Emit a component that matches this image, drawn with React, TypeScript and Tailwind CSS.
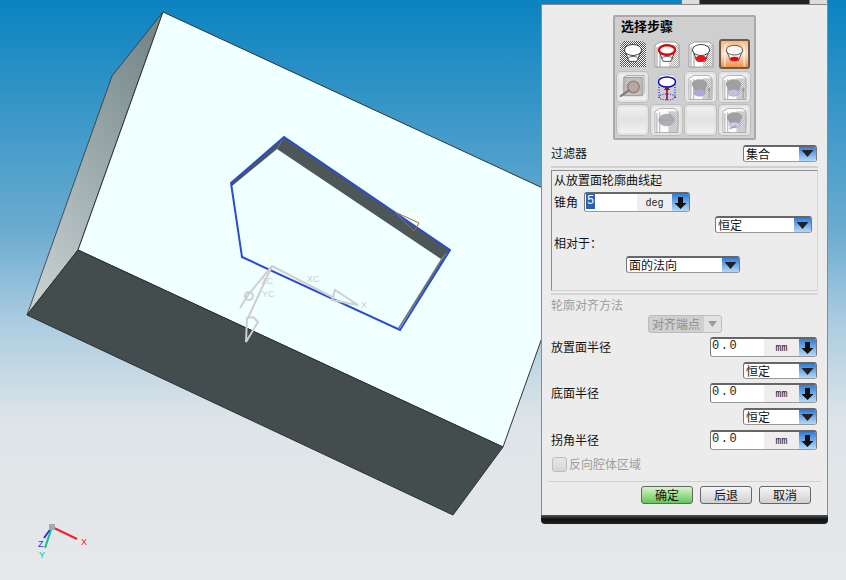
import React from "react";

const cjk = "font-['Noto_Sans_CJK_SC','Liberation_Sans',sans-serif]";

type IconKind =
  | "red"
  | "topRing"
  | "bottomFill"
  | "active"
  | "point"
  | "extrude"
  | "grayA"
  | "grayB"
  | "grayC"
  | "grayD"
  | "none";

// checker tile: only the coloured squares, the rest stays see-through
const Dither = ({ id, color }: { id: string; color: string }) => (
  <defs>
    <pattern id={id} width="2" height="2" patternUnits="userSpaceOnUse">
      <rect width="1" height="1" fill={color} />
      <rect x="1" y="1" width="1" height="1" fill={color} />
    </pattern>
  </defs>
);

const Sleeve = ({ fill }: { fill: string }) => (
  <g>
    <path d="M2 6 L7 3 L22 3 L26 6 L26 28 L2 28 Z" fill="#fff" stroke="#888" strokeWidth="0.8" />
    <rect x="16" y="6" width="10" height="22" fill={fill} />
    <path d="M4 8 V28 M7 7 V28" stroke="#999" strokeWidth="1" />
  </g>
);

const Bowl = ({ stroke = "#444", fill = "#fff" }: { stroke?: string; fill?: string }) => (
  <g>
    <path d="M5.5 11 L10 22 H18 L22.5 11 Z" fill={fill} stroke={stroke} strokeWidth="1" />
    <ellipse cx="14" cy="11" rx="8.5" ry="5.5" fill={fill} stroke={stroke} strokeWidth="1" />
    <ellipse cx="14" cy="20" rx="5" ry="2.5" fill={fill} stroke={stroke} strokeWidth="0.8" />
  </g>
);

const StepIcon = ({ kind }: { kind: IconKind }) => {
  if (kind === "none") return null;
  const id = `dither-${kind}`;
  const tone = kind === "red" ? "#ffffff" : kind.startsWith("gray") || kind === "point" ? "#8a8a8a" : "#aaaaaa";
  return (
    <svg width="28" height="30" viewBox="0 0 28 30">
      <Dither id={id} color={tone} />
      {kind === "red" && (
        <g>
          <path d="M1 5 L5 2 H23 L27 5 V28 H1 Z" fill="#f00a1e" />
          <path d="M1 5 L5 2 H23 L27 5 V28 H1 Z" fill={`url(#${id})`} />
          <Bowl />
        </g>
      )}
      {kind === "topRing" && (
        <g>
          <Sleeve fill={`url(#${id})`} />
          <Bowl />
          <ellipse cx="14" cy="11" rx="8" ry="4.5" fill="#fff" stroke="#f00000" strokeWidth="2.2" />
        </g>
      )}
      {kind === "bottomFill" && (
        <g>
          <Sleeve fill={`url(#${id})`} />
          <Bowl />
          <ellipse cx="14" cy="19.5" rx="5.5" ry="3" fill="#f01020" />
        </g>
      )}
      {kind === "active" && (
        <g>
          <path d="M4 28 V6 L7 4 M24 28 V6 L21 4" stroke="#fff" strokeWidth="1" fill="none" />
          <path d="M5.5 11 L10 22 H18 L22.5 11 Z" fill="#fff" fillOpacity="0.8" stroke="#555" strokeWidth="1" />
          <ellipse cx="14" cy="11" rx="8.5" ry="5" fill="#fff" fillOpacity="0.9" stroke="#555" strokeWidth="1" />
          <ellipse cx="14" cy="20" rx="4.5" ry="2.2" fill="#f00000" />
        </g>
      )}
      {kind === "point" && (
        <g opacity="0.85">
          <rect x="5" y="5" width="19" height="19" fill={`url(#${id})`} stroke="#888" strokeWidth="1" />
          <path d="M5 5 L8 3 H26 V21 L24 24" fill="none" stroke="#999" strokeWidth="1" />
          <circle cx="15" cy="15" r="6" fill="#a9a09a" stroke="#a06a5a" strokeWidth="1.5" />
          <path d="M1 25 L11 18" stroke="#666" strokeWidth="2" />
        </g>
      )}
      {kind === "extrude" && (
        <g>
          <path d="M6 10 V26 M22 10 V26" stroke="#0000c0" strokeWidth="1" strokeDasharray="1 1.5" />
          <path d="M5 5 L8 3 H20 L23 5" stroke="#aaa" strokeWidth="0.8" fill="#fff" />
          <ellipse cx="14" cy="10" rx="8.5" ry="5" fill="#fff" stroke="#0000d0" strokeWidth="1.4" />
          <ellipse cx="14" cy="25" rx="8" ry="3" fill="none" stroke="#0000c0" strokeWidth="1" strokeDasharray="1 1.5" />
          <path d="M14 28 V17" stroke="#8a1020" strokeWidth="1.6" />
          <path d="M11 18 L14 14 L17 18 Z" fill="#8a1020" />
        </g>
      )}
      {(kind === "grayA" || kind === "grayB") && (
        <g opacity="0.8">
          <Sleeve fill={`url(#${id})`} />
          <ellipse cx="13" cy="12" rx="8" ry="5" fill="#8f8f8f" />
          <path d="M5 12 L9 22 H18 L21 12 Z" fill="#8f8f8f" />
          <ellipse cx="13" cy="21" rx="6" ry="3.5" fill={kind === "grayA" ? "#9c9cd0" : "#b8b8d8"} stroke="#8888c8" strokeWidth="0.6" />
          <path d="M23 27 V18" stroke="#a08080" strokeWidth="1.2" />
          <path d="M21 19 L23 15 L25 19 Z" fill="#a08080" />
        </g>
      )}
      {kind === "grayC" && (
        <g opacity="0.8">
          <Sleeve fill={`url(#${id})`} />
          <ellipse cx="14" cy="15" rx="8" ry="6" fill="#a0a0a0" stroke="#8888c8" strokeWidth="0.8" />
          <path d="M6 15 H21" stroke="#8888c8" strokeWidth="0.8" />
          <path d="M18 8 V13 M10 17 L6 15" stroke="#b08888" strokeWidth="1.2" />
        </g>
      )}
      {kind === "grayD" && (
        <g opacity="0.8">
          <Sleeve fill={`url(#${id})`} />
          <ellipse cx="14" cy="12" rx="8" ry="5" fill="#8f8f8f" />
          <path d="M6 12 L10 21 H18 L22 12 Z" fill="#8f8f8f" />
          <ellipse cx="14" cy="20" rx="5.5" ry="3" fill="#c8c8dc" stroke="#8888c8" strokeWidth="0.6" />
          <path d="M9 24 L16 21" stroke="#b07888" strokeWidth="1.4" />
        </g>
      )}
    </svg>
  );
};

const rows: { kind: IconKind; look: "flat" | "active" | "raised" }[][] = [
  [
    { kind: "red", look: "flat" },
    { kind: "topRing", look: "flat" },
    { kind: "bottomFill", look: "flat" },
    { kind: "active", look: "active" },
  ],
  [
    { kind: "point", look: "raised" },
    { kind: "extrude", look: "flat" },
    { kind: "grayA", look: "raised" },
    { kind: "grayB", look: "raised" },
  ],
  [
    { kind: "none", look: "raised" },
    { kind: "grayC", look: "raised" },
    { kind: "none", look: "raised" },
    { kind: "grayD", look: "raised" },
  ],
];

const lookClass = {
  flat: "",
  active:
    "rounded-[3px] border-2 border-[#6e5a48] bg-gradient-to-b from-[#fbb77a] via-[#fde3cb] to-[#f78e3d]",
  raised:
    "rounded-[4px] border-2 border-[#e2e2e2] bg-gradient-to-b from-[#f0f0f0] via-[#e2e2e2] to-[#f2f2f2] shadow-[0_0_0_1px_#bdbdbd]",
};

const BlueButton = ({ wide }: { wide?: boolean }) => (
  <div className="flex h-full w-[17px] shrink-0 items-center justify-center bg-gradient-to-b from-[#2f7cd6] to-[#b4d8f8]">
    {wide ? (
      <svg width="13" height="14" viewBox="0 0 13 14">
        <path d="M4 1 H9 V7 H12.5 L6.5 13 L0.5 7 H4 Z" fill="#111" />
      </svg>
    ) : (
      <svg width="13" height="9" viewBox="0 0 13 9">
        <path d="M0.5 1 H12.5 L6.5 8 Z" fill="#222" />
      </svg>
    )}
  </div>
);

const Select = ({ label, width }: { label: string; width: string }) => (
  <div
    className={`flex h-[17px] items-center overflow-hidden rounded-[3px] border-x border-b border-t-2 border-x-[#777] border-t-[#666] border-b-[#999] bg-white ${width}`}
  >
    <span className={`flex-1 pl-[2px] text-[12px] leading-none text-[#111] ${cjk}`}>{label}</span>
    <BlueButton />
  </div>
);

const NumberField = ({ value, unit, width }: { value: string; unit: string; width: string }) => (
  <div
    className={`flex h-[20px] items-center overflow-hidden rounded-[3px] border-x border-b border-t-2 border-x-[#777] border-t-[#666] border-b-[#999] bg-white ${width}`}
  >
    <div className="flex h-full flex-1 items-start pl-[1px]">
      {value === "5" ? (
        <span className="bg-[#2f5fb0] px-[1px] font-['Liberation_Mono',monospace] text-[12px] leading-[15px] text-white">
          5
        </span>
      ) : (
        <span className="font-['Liberation_Mono',monospace] text-[12px] leading-[14px] tracking-[1.5px] text-[#222]">
          {value}
        </span>
      )}
    </div>
    <div className="flex h-full w-[35px] items-center justify-center bg-[#eeeeee] pt-[2px] font-['Liberation_Mono',monospace] text-[10px] text-[#222]">
      {unit}
    </div>
    <BlueButton wide />
  </div>
);

const Label = ({ children, muted }: { children: React.ReactNode; muted?: boolean }) => (
  <span className={`block text-[12px] leading-[16px] ${muted ? "text-[#9d9d9d]" : "text-[#111]"} ${cjk}`}>{children}</span>
);

const ActionButton = ({ label, primary }: { label: string; primary?: boolean }) => (
  <button
    className={`flex h-[18px] w-[52px] items-center justify-center rounded-[3px] border border-[#666] text-[12px] leading-none text-[#111] ${cjk} ${
      primary
        ? "bg-gradient-to-b from-[#d8f5c8] to-[#63c45a]"
        : "bg-gradient-to-b from-[#f6f6f6] to-[#d0d0d0]"
    }`}
  >
    {label}
  </button>
);

const RadiusRow = ({ label }: { label: string }) => (
  <div className="flex h-[20px] items-center justify-between pl-[9px] pr-[10px]">
    <Label>{label}</Label>
    <NumberField value="0.0" unit="mm" width="w-[107px]" />
  </div>
);

const ConstantRow = () => (
  <div className="mt-[5px] flex justify-end pr-[10px]">
    <Select label="恒定" width="w-[74px]" />
  </div>
);

const Scene = () => (
  <svg className="absolute inset-0" width="846" height="580" viewBox="0 0 846 580">
    <defs>
      <linearGradient id="sideFace" x1="0.75" y1="0" x2="0.2" y2="1">
        <stop offset="0" stopColor="#76878a" />
        <stop offset="1" stopColor="#c6d0d0" />
      </linearGradient>
    </defs>
    <polygon points="163,12 112,76 27,315 78,250" fill="url(#sideFace)" stroke="#333" strokeWidth="0.8" />
    <polygon points="163,12 588,209 503,447 78,250" fill="#f0ffff" stroke="#333" strokeWidth="1" />
    <polygon points="78,250 503,447 453,515 27,315" fill="#444d4d" stroke="#2c3030" strokeWidth="1" />

    <polygon points="231,183 284,137 277,149 232,186" fill="#4d5757" />
    <polygon points="284,137 450,250 441,259 277,149" fill="#4d5757" />
    <polygon points="450,250 399,329 398,328 441,259" fill="#6a7272" />
    <polygon
      points="231,183 284,137 450,250 400,330 242,257"
      fill="none"
      stroke="#2b4bd2"
      strokeWidth="2"
    />

    <polygon points="395,212 419,223 414,231" fill="none" stroke="#b06a2a" strokeWidth="1" />

    <g stroke="#cfcfcf" fill="none" strokeWidth="2">
      <path d="M272 266 L334 298" />
      <path d="M335 290 L358 305 L332 300 Z" />
      <path d="M272 266 L248 318" />
      <path d="M253 317 L258 322 L246 342 L247 318 Z" />
      <path d="M272 266 L248 295 L240 308" />
      <circle cx="249" cy="296" r="4" />
    </g>
    <g className="font-['Liberation_Sans',sans-serif]" fontSize="9" fill="#cfcfcf">
      <text x="307" y="282">XC</text>
      <text x="361" y="308">X</text>
      <text x="262" y="297">YC</text>
      <text x="261" y="284">ZC</text>
    </g>

    <g strokeWidth="2">
      <path d="M52 527 L77 539" stroke="#f02030" />
      <path d="M52 527 L44 538" stroke="#2a30e0" />
      <path d="M52 527 L45 548" stroke="#10c080" />
    </g>
    <rect x="49" y="524" width="6" height="6" fill="#a8a8a8" />
    <g className="font-['Liberation_Sans',sans-serif]" fontSize="9">
      <text x="81" y="545" fill="#f02030">X</text>
      <text x="38" y="547" fill="#2a30e0">Z</text>
      <text x="39" y="558" fill="#10c080">Y</text>
    </g>
  </svg>
);

const App = () => {
  return (
    <div className="relative flex h-[580px] w-[846px] justify-end overflow-hidden bg-[linear-gradient(180deg,#0a83c0_0%,#6cacd0_40%,#a9cbe0_55%,#dde4e8_72%,#e7e8ea_100%)] pr-[18px]">
      <Scene />

      <div className="relative flex h-[524px] w-[287px] flex-col">
        <div className="ml-auto flex h-[4px] w-[147px] shrink-0">
          <div className="w-[19px] border-x border-[#777] bg-[#dcdcdc]" />
          <div className="flex-1 bg-[#222]" />
          <div className="w-[19px] border-x border-[#777] bg-[#dcdcdc]" />
        </div>
        <div className="flex flex-1 flex-col border-x border-t border-[#8a8a8a] bg-[#ececec]">
          <div className="ml-[71px] mt-[10px] flex h-[125px] w-[143px] flex-col rounded-[2px] border-2 border-[#a9a9a9] bg-[#cfcfcf] pl-[2px]">
            <span className={`mt-[1px] pl-[4px] text-[13px] font-bold leading-[16px] text-black ${cjk}`}>选择步骤</span>
            <div className="mt-[5px] grid grid-cols-[repeat(4,31px)] grid-rows-[repeat(3,30px)] gap-x-[3px] gap-y-[3px]">
              {rows.flat().map((cell, i) => (
                <div key={i} className={`flex items-center justify-center overflow-hidden ${lookClass[cell.look]}`}>
                  <StepIcon kind={cell.kind} />
                </div>
              ))}
            </div>
          </div>

          <div className="mt-[4px] flex h-[18px] items-center justify-between pl-[9px] pr-[10px]">
            <Label>过滤器</Label>
            <Select label="集合" width="w-[74px]" />
          </div>
          <div className="mx-[9px] mt-[4px] h-[2px] bg-[#cfcfcf]" />

          <div className="mx-[9px] mt-[2px] flex h-[121px] flex-col border border-[#8d8d8d] border-r-[#d4d4d4] border-b-[#d4d4d4] pl-[2px] pr-[5px]">
            <div className="mt-[1px]">
              <Label>从放置面轮廓曲线起</Label>
            </div>
            <div className="mt-[4px] flex h-[20px] items-center gap-[6px]">
              <Label>锥角</Label>
              <NumberField value="5" unit="deg" width="w-[106px]" />
            </div>
            <div className="mt-[4px] flex justify-end">
              <Select label="恒定" width="w-[97px]" />
            </div>
            <div className="mt-[2px]">
              <Label>相对于：</Label>
            </div>
            <div className="ml-[72px] mt-[5px]">
              <Select label="面的法向" width="w-[114px]" />
            </div>
          </div>

          <div className="mx-[9px] mt-[2px] h-[2px] bg-[#d6d6d6]" />
          <div className="mt-[2px] pl-[9px]">
            <Label muted>轮廓对齐方法</Label>
          </div>
          <div className="ml-[106px] mt-[2px] flex h-[18px] w-[74px] items-center overflow-hidden rounded-[3px] border border-[#bdbdbd] bg-[#cfcfcf]">
            <span className={`flex-1 pl-[3px] text-[12px] leading-none text-[#8e8e8e] ${cjk}`}>对齐端点</span>
            <div className="flex h-full w-[17px] items-center justify-center bg-[#e2e2e2]">
              <svg width="11" height="8" viewBox="0 0 11 8">
                <path d="M1 1 H10 L5.5 7 Z" fill="#9c9c9c" />
              </svg>
            </div>
          </div>

          <div className="mt-[4px]">
            <RadiusRow label="放置面半径" />
            <ConstantRow />
          </div>
          <div className="mt-[4px]">
            <RadiusRow label="底面半径" />
            <ConstantRow />
          </div>
          <div className="mt-[5px]">
            <RadiusRow label="拐角半径" />
          </div>

          <div className="mt-[6px] flex h-[16px] items-center gap-[2px] pl-[10px]">
            <div className="h-[15px] w-[15px] rounded-[3px] border border-[#bdbdbd] bg-gradient-to-b from-[#e8e8e8] to-[#d6d6d6]" />
            <Label muted>反向腔体区域</Label>
          </div>

          <div className="mx-[6px] mt-[9px] h-px bg-[#d0d0d0]" />
          <div className="mt-[4px] flex gap-[7px] pl-[99px]">
            <ActionButton label="确定" primary />
            <ActionButton label="后退" />
            <ActionButton label="取消" />
          </div>
        </div>
        <div className="h-[9px] shrink-0 rounded-b-[4px] bg-gradient-to-b from-[#555] via-[#111] to-[#222]" />
      </div>
    </div>
  );
};

export default App;
